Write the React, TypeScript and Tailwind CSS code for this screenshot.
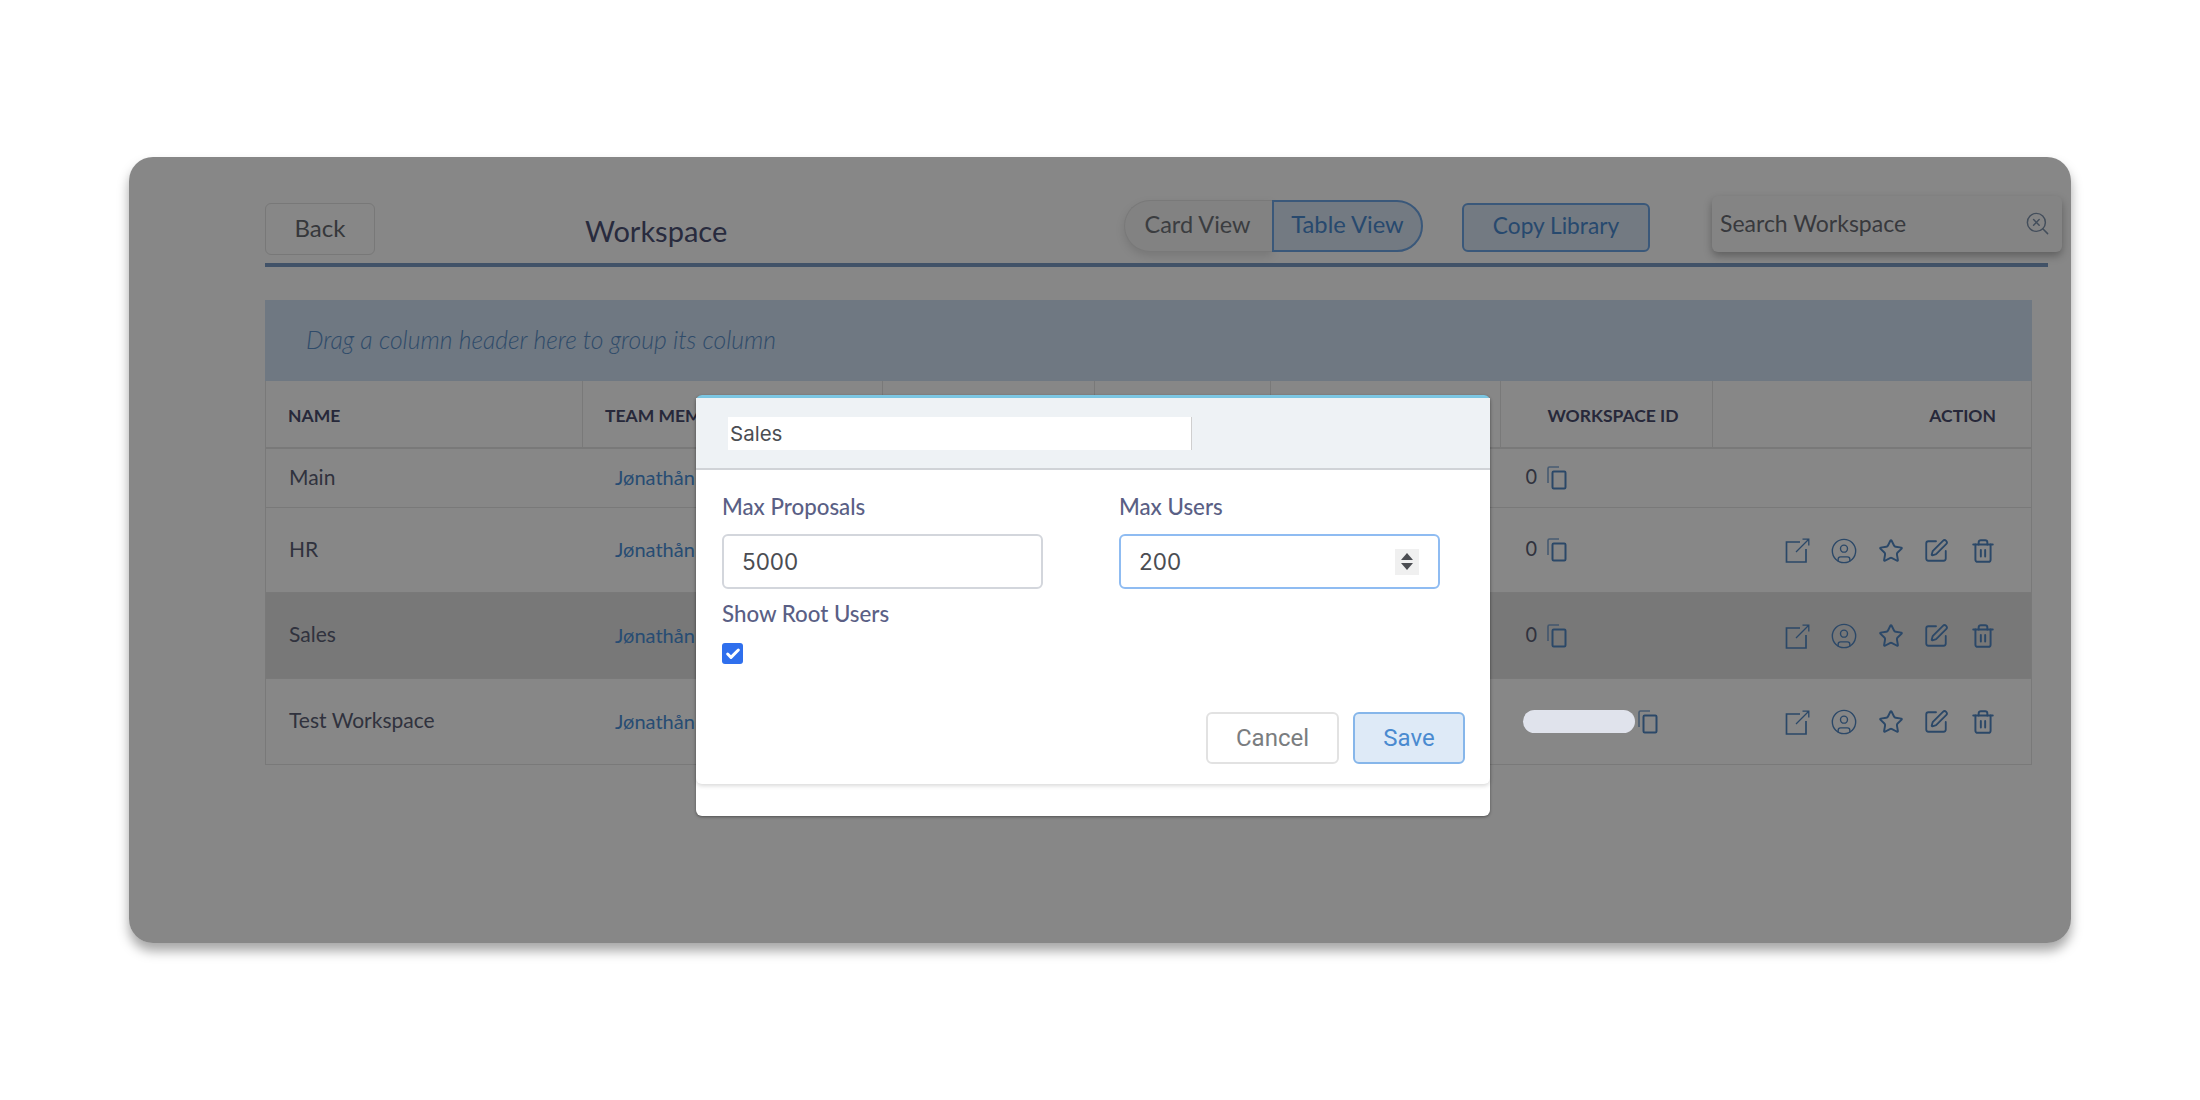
import { Check, CircleUser, SearchX, SquarePen, Star, Trash2 } from 'lucide-react';

const FONT = "font-['Lato','Noto_Sans',sans-serif]";

const COLUMNS = ['NAME', 'TEAM MEMBERS', 'CREATED', 'USERS', 'PROPOSALS', 'WORKSPACE ID', 'ACTION'];

const ROWS = [
  { name: 'Main', height: 'h-[59px]', actions: false, selected: false, id: '0' },
  { name: 'HR', height: 'h-[85px]', actions: true, selected: false, id: '0' },
  { name: 'Sales', height: 'h-[86px]', actions: true, selected: true, id: '0' },
  { name: 'Test Workspace', height: 'h-[85px]', actions: true, selected: false, id: '' },
];

const GRID = 'grid grid-cols-[317px_300px_212px_176px_230px_212px_1fr]';

function CopyIcon() {
  return (
    <svg width="20" height="24" viewBox="0 0 20 24" fill="none" stroke="#5288c4" strokeWidth="1.6" className="shrink-0">
      <path d="M1 17V2.5Q1 1 2.500 1H12" opacity="0.7" />
      <rect x="5.500" y="5.500" width="13" height="17" rx="1.200" strokeWidth="2" />
    </svg>
  );
}

function OpenIcon() {
  return (
    <svg width="25" height="25" viewBox="0 0 25 25" fill="none" stroke="#5288c4" strokeWidth="1.700">
      <path d="M15 4H1.500V24H21V11" />
      <path d="M11 14L23.500 1.500M17.500 1.200H23.800V7.500" strokeWidth="1.300" />
    </svg>
  );
}

function RowActions() {
  return (
    <div className="mt-[1px] flex items-center justify-end pr-[35px]">
      <OpenIcon />
      <CircleUser size={28} strokeWidth={1.2} color="#5288c4" className="ml-[20px]" />
      <Star size={26} strokeWidth={1.8} color="#5288c4" className="ml-[20px]" />
      <SquarePen size={26} strokeWidth={1.7} color="#5288c4" className="ml-[19px]" />
      <Trash2 size={26} strokeWidth={1.8} color="#5288c4" className="ml-[21px]" />
    </div>
  );
}

function Field({ label, value, focused }: { label: string; value: string; focused?: boolean }) {
  return (
    <div className="w-[321px]">
      <div className="flex h-[27px] items-center pb-[1px] text-[22.300px] font-medium text-[#5a5f85]">{label}</div>
      <div
        className={`mt-[13px] flex h-[55px] items-center justify-between rounded-[6px] border-2 bg-white pr-[19px] pl-[18px] font-['Inter',sans-serif] text-[22.500px] text-[#4b4d52] ${
          focused ? 'border-[#8fbcf2]' : 'border-[#d3d6dc]'
        }`}
      >
        {value}
        {focused && (
          <div className="flex h-[26px] w-[24px] flex-col items-center justify-center gap-[3px] bg-[#f0f0f0]">
            <div className="h-0 w-0 border-x-[6px] border-b-[7px] border-x-transparent border-b-[#4b4d52]" />
            <div className="h-0 w-0 border-x-[6px] border-t-[7px] border-x-transparent border-t-[#4b4d52]" />
          </div>
        )}
      </div>
    </div>
  );
}

export default function App() {
  return (
    <div className={`h-[1100px] w-[2200px] overflow-hidden bg-white pt-[157px] pl-[129px] ${FONT}`}>
      <div className="relative h-[786px] w-[1942px] rounded-[24px] bg-white pt-[39px] pl-[136px] shadow-[0_8px_12px_rgba(0,0,0,0.35)]">
        {/* top bar */}
        <div className="flex h-[56px] w-[1797px] items-start">
          <button className="mt-[7px] h-[52px] w-[110px] rounded-[6px] border border-[#e2e2e2] bg-white pb-[3px] text-[24px] text-[#666a70]">
            Back
          </button>
          <h1 className="mt-[14px] ml-[210px] text-[29px] leading-[42px] text-[#4d5175]">Workspace</h1>
          <div className="mt-[4px] ml-auto flex h-[52px]">
            <div className="flex w-[148px] items-center justify-center rounded-l-[26px] border border-r-0 border-[#e4e4e4] bg-[#f5f5f5] pr-[2px] pb-[2px] text-[23.500px] text-[#70747a] shadow-[0_4px_10px_rgba(0,0,0,0.12)]">
              Card View
            </div>
            <div className="flex w-[151px] items-center justify-center rounded-r-[26px] border-2 border-[#6ea6e6] bg-[#d9e6f5] pb-[2px] text-[23.700px] text-[#4a8ad0]">
              Table View
            </div>
          </div>
          <button className="mt-[7px] ml-[39px] h-[49px] w-[188px] rounded-[6px] border-2 border-[#6ea6e6] bg-[#d9e6f5] pb-[2px] text-[22.700px] text-[#4a8ad0]">
            Copy Library
          </button>
          <div className="ml-[62px] flex h-[56px] w-[350px] items-center justify-between rounded-[6px] bg-[#fafafa] pr-[11px] pb-[2px] pl-[8px] text-[23px] text-[#6a6d74] shadow-[0_4px_8px_rgba(0,0,0,0.3)]">
            Search Workspace
            <SearchX size={27} strokeWidth={1.3} color="#7f93ad" />
          </div>
        </div>
        <div className="mt-[11px] h-[4px] w-[1783px] bg-[#7c9cc4]" />

        {/* table */}
        <div className="mt-[33px] w-[1767px]">
          <div className="flex h-[81px] items-center bg-[#d1e2f6] pb-[2px] pl-[41px] text-[24.700px] font-light text-[#5a8fc8] italic">
            Drag a column header here to group its column
          </div>
          <div className={`${GRID} h-[68px] border-x border-b-2 border-[#e4e4e4]`}>
            {COLUMNS.map((col, i) => (
              <div
                key={col}
                className={`flex items-center border-[#e4e4e4] pt-[4px] text-[17.500px] font-bold text-[#4a4d6e] ${
                  i < 6 ? 'border-r' : ''
                } ${i === 6 ? 'justify-end pr-[35px]' : i === 5 ? 'justify-center pl-[13px]' : 'pl-[22px]'}`}
              >
                {col}
              </div>
            ))}
          </div>
          <div className="border-x border-b border-[#e4e4e4]">
            {ROWS.map((row, i) => (
              <div
                key={row.name}
                className={`${GRID} ${row.height} items-center text-[21px] ${i < 3 ? 'border-b border-[#e4e4e4]' : ''} ${
                  row.selected ? 'bg-[#e2e2e2]' : ''
                }`}
              >
                <div className="pb-[3px] pl-[23px] text-[#5b5f75]">{row.name}</div>
                <div className="pb-[2px] pl-[32px] text-[20px] text-[#4a90d9]">Jønathån Døe</div>
                <div />
                <div />
                <div />
                <div className="flex items-center pl-[24px] text-[20px] text-[#5b5f75]">
                  {row.id ? (
                    <span className="mr-[8px] mb-[2px] w-[14px] font-['Inter',sans-serif]">{row.id}</span>
                  ) : (
                    <span className="relative z-20 mr-[3px] -ml-[2px] h-[23px] w-[112px] rounded-full bg-[#e0e3ec]" />
                  )}
                  <CopyIcon />
                </div>
                {row.actions ? <RowActions /> : <div />}
              </div>
            ))}
          </div>
        </div>

        {/* backdrop */}
        <div className="absolute inset-0 z-10 rounded-[24px] bg-black/[0.47]" />

        {/* modal */}
        <div className="absolute top-[238px] left-[567px] z-20 h-[421px] w-[794px] rounded-[6px] border-t-[3px] border-[#7cc8e4] bg-white shadow-[0_1px_3px_rgba(0,0,0,0.4)]">
          <div className="h-[386px] rounded-b-[6px] shadow-[0_2px_4px_rgba(0,0,0,0.15)]">
            <div className="flex h-[72px] items-start border-b-2 border-[#d0d3d7] bg-[#eef2f5] pt-[19px] pl-[32px]">
              <div className="flex h-[33px] w-[464px] items-center border-r border-[#cfcfcf] bg-white pt-[2px] pl-[2px] font-['Inter',sans-serif] text-[20.500px] text-[#4b4d52]">
                Sales
              </div>
            </div>
            <div className="pt-[24px] pl-[26px]">
              <div className="flex gap-[76px]">
                <Field label="Max Proposals" value="5000" />
                <Field label="Max Users" value="200" focused />
              </div>
              <div className="mt-[11px] flex h-[27px] items-center text-[22.300px] font-medium text-[#5a5f85]">
                Show Root Users
              </div>
              <div className="mt-[16px] flex h-[21px] w-[21px] items-center justify-center rounded-[3px] bg-[#2f6fed]">
                <Check size={16} strokeWidth={4.500} color="white" />
              </div>
              <div className="mt-[48px] mr-[25px] flex justify-end gap-[14px]">
                <button className="h-[52px] w-[133px] rounded-[6px] border-2 border-[#e2e2e2] bg-white font-['Roboto',sans-serif] text-[24px] text-[#7a7d80]">
                  Cancel
                </button>
                <button className="h-[52px] w-[112px] rounded-[6px] border-2 border-[#86b6ea] bg-[#deeaf7] font-['Roboto',sans-serif] text-[24px] text-[#4a8ad0]">
                  Save
                </button>
              </div>
            </div>
          </div>
        </div>
      </div>
    </div>
  );
}
